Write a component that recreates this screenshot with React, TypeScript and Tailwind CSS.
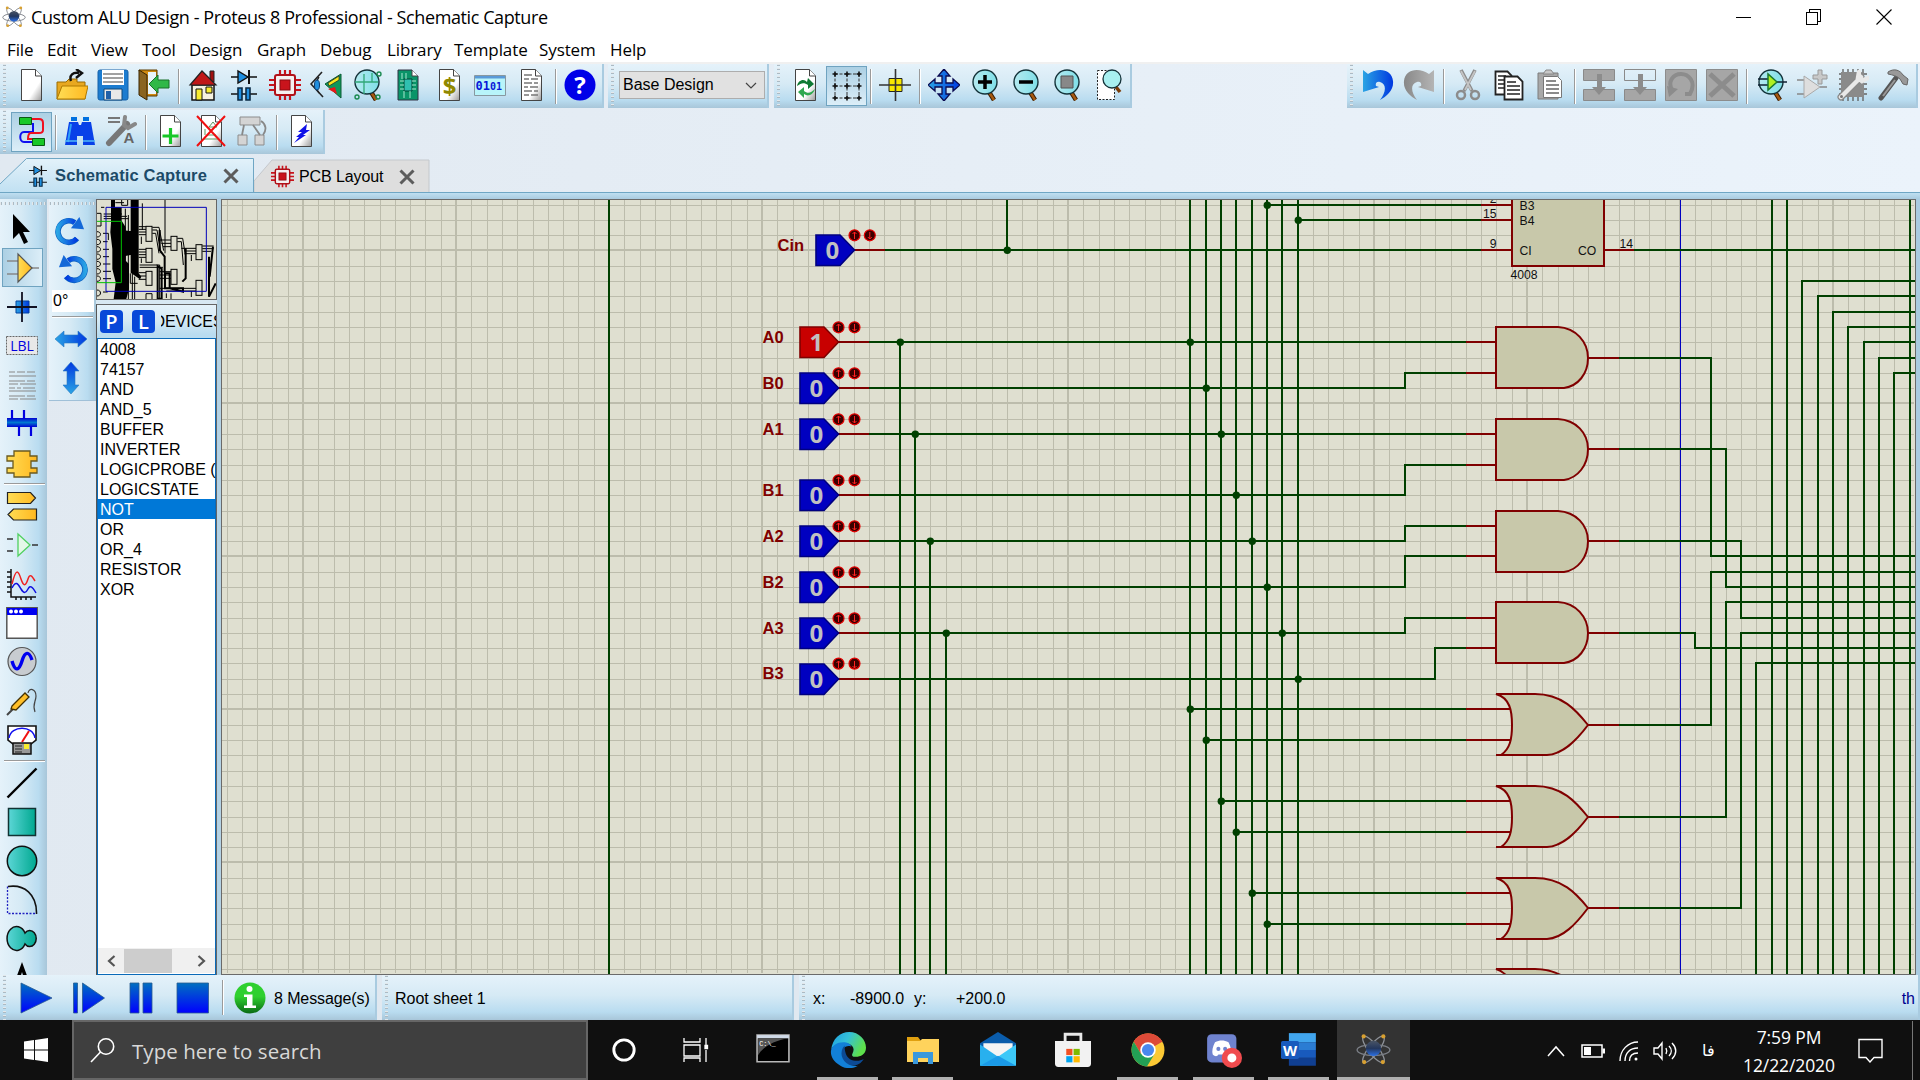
import React from "react";

type Kids = { children?: React.ReactNode };

const Ico = ({ children, s = 32 }: Kids & { s?: number }) => (
  <svg width={s} height={s} viewBox="0 0 32 32" fill="none" className="shrink-0">
    {children}
  </svg>
);

const Cell = ({ children, on }: Kids & { on?: boolean }) => (
  <div
    className={
      on
        ? "flex h-10 w-[41px] shrink-0 items-center justify-center border border-[#6fa3c0] bg-gradient-to-b from-[#acd0e4] to-[#dceef8]"
        : "flex h-10 w-[41px] shrink-0 items-center justify-center pb-[2px] pr-[2px]"
    }
  >
    {children}
  </div>
);

const Sep = () => (
  <div className="flex w-2 shrink-0 justify-center">
    <div className="h-[35px] w-px bg-[#9a9a9a]" />
    <div className="h-[35px] w-px bg-white" />
  </div>
);

const Grip = () => (
  <div className="ml-[3px] h-full w-[3px] shrink-0 bg-[repeating-linear-gradient(to_bottom,#ffffff_0px,#8fa3b0_2px,transparent_2px,transparent_4px)]" />
);

const Bar = ({ children, className = "" }: Kids & { className?: string }) => (
  <div
    className={
      "flex items-center border-r-2 border-[#a9cbe0] bg-[linear-gradient(to_bottom,#e5f2fa,#d6eaf5_45%,#b9dcf0_82%,#a8c6d9)] " + className
    }
  >
    {children}
  </div>
);

/* ---------- shared icon shapes ---------- */

const Page = ({ children }: Kids) => (
  <Ico>
    <path d="M6.500 .5h14l6 6.500v24.500h-20z" fill="url(#paper)" stroke="#444" />
    <path d="M20.500 .5V7h6" fill="#fff" stroke="#444" />
    {children}
  </Ico>
);

const Lens = ({ children }: Kids) => (
  <Ico>
    <path d="M20 23l5 8" stroke="#3a1c00" strokeWidth="4.5" />
    <path d="M20 23l5 8" stroke="#a85a10" strokeWidth="2.5" />
    <circle cx="16" cy="13" r="12" fill="url(#lens)" stroke="#14333a" strokeWidth="1.4" />
    {children}
  </Ico>
);

const Diode = ({ s = 32 }: { s?: number }) => (
  <Ico s={s}>
    <path d="M3 8h26M3 25h26" stroke="#111" strokeWidth="1.6" />
    <path d="M10 2v12l10-6z" fill="#1f8fe0" stroke="#111" strokeWidth="1.4" />
    <path d="M21 1v14" stroke="#111" strokeWidth="2" />
    <path d="M10 19h4v12h-4zM18 19h4v12h-4z" fill="#1f8fe0" stroke="#0a2a44" strokeWidth="1.6" />
  </Ico>
);

const Chip = ({ s = 32 }: { s?: number }) => (
  <Ico s={s}>
    <path d="M11 1v30M16 1v30M21 1v30M0 11h32M0 16h32M0 21h32" stroke="#c8141c" strokeWidth="2.2" />
    <rect x="6" y="6" width="20" height="20" rx="2" fill="#f4f0f0" stroke="#b01018" strokeWidth="2" />
    <rect x="11" y="11" width="10" height="10" fill="#c8141c" stroke="#8a0a10" />
  </Ico>
);

const Atom = ({ s = 24 }: { s?: number }) => (
  <Ico s={s}>
    <ellipse cx="16" cy="16" rx="15" ry="4.500" stroke="#8e9298" strokeWidth="1.2" transform="rotate(52 16 16)" />
    <ellipse cx="16" cy="16" rx="15" ry="4.500" stroke="#8e9298" strokeWidth="1.2" transform="rotate(-52 16 16)" />
    <ellipse cx="16" cy="16.500" rx="15" ry="5" stroke="#7c8088" strokeWidth="1.2" />
    <circle cx="16" cy="15" r="7" fill="url(#ball)" />
    <g fill="#d8a030">
      <circle cx="7" cy="4" r="1.900" />
      <circle cx="25" cy="4" r="1.900" />
      <circle cx="7.500" cy="27.500" r="1.900" />
      <circle cx="24.500" cy="27.500" r="1.900" />
    </g>
  </Ico>
);

const Block = ({ children }: Kids) => (
  <Ico>
    <path d="M.5.5h31v31H.5z" fill="#a6a6a6" stroke="#8c8c8c" />
    {children}
  </Ico>
);

const Defs = () => (
  <svg width="0" height="0" className="absolute">
    <defs>
      <linearGradient id="paper" x1="0" y1="0" x2="1" y2="1">
        <stop offset=".65" stopColor="#fff" />
        <stop offset="1" stopColor="#9a9a9a" />
      </linearGradient>
      <linearGradient id="lens" x1="0" x2="1">
        <stop offset="0" stopColor="#b5eaf0" />
        <stop offset="1" stopColor="#7fdfe8" />
      </linearGradient>
      <linearGradient id="ball" x1="0" y1="0" x2="0" y2="1">
        <stop offset="0" stopColor="#4a5566" />
        <stop offset=".5" stopColor="#24375c" />
        <stop offset="1" stopColor="#2a70e8" />
      </linearGradient>
      <linearGradient id="blue" x1="0" x2="1">
        <stop offset="0" stopColor="#2aa4e4" />
        <stop offset="1" stopColor="#0038e0" />
      </linearGradient>
      <linearGradient id="play" x1="0" y1="0" x2="0" y2="1">
        <stop offset="0" stopColor="#0070c0" />
        <stop offset="1" stopColor="#0000ff" />
      </linearGradient>
      <linearGradient id="bus" x1="0" y1="0" x2="0" y2="1">
        <stop offset="0" stopColor="#0000d0" />
        <stop offset=".5" stopColor="#0078d0" />
        <stop offset="1" stopColor="#0000d0" />
      </linearGradient>
      <linearGradient id="gold" x1="0" x2="1">
        <stop offset="0" stopColor="#ffdd55" />
        <stop offset="1" stopColor="#ffb820" />
      </linearGradient>
      <linearGradient id="teal" x1="0" x2="1">
        <stop offset="0" stopColor="#5cd6d6" />
        <stop offset="1" stopColor="#00a890" />
      </linearGradient>
      <linearGradient id="grey" x1="0" x2="1">
        <stop offset="0" stopColor="#888" />
        <stop offset="1" stopColor="#b4b4b4" />
      </linearGradient>
      <linearGradient id="info" x1="0" y1="0" x2="0" y2="1">
        <stop offset=".45" stopColor="#2fd02f" />
        <stop offset="1" stopColor="#0a6a14" />
      </linearGradient>
      <linearGradient id="edgeA" x1="0" y1="0" x2="1" y2=".4">
        <stop offset="0" stopColor="#1b9de2" />
        <stop offset=".5" stopColor="#35c1d8" />
        <stop offset="1" stopColor="#5ee04c" />
      </linearGradient>
    </defs>
  </svg>
);

/* ---------- title bar and menu ---------- */

const TitleBar = () => (
  <div className="flex h-9 items-center bg-white pb-[2px]">
    <div className="ml-px flex w-[26px] justify-center">
      <Atom s={24} />
    </div>
    <div className="ml-[4px] whitespace-nowrap font-['Open_Sans',sans-serif] text-[18px] tracking-[-0.4px] text-black">
      Custom ALU Design - Proteus 8 Professional - Schematic Capture
    </div>
    <div className="ml-auto mr-[28px] flex items-center gap-[54px]">
      <svg width="16" height="16" viewBox="0 0 16 16" shapeRendering="crispEdges">
        <path d="M0 8h15" stroke="#000" />
      </svg>
      <svg width="16" height="16" viewBox="0 0 16 16" fill="none" shapeRendering="crispEdges">
        <path d="M.5 3.500h11v12H.5zM3.500 3V.5h11v12H12" stroke="#000" />
      </svg>
      <svg width="16" height="16" viewBox="0 0 16 16">
        <path d="M.5.5l15 15M15.500.500l-15 15" stroke="#000" strokeWidth="1.1" />
      </svg>
    </div>
  </div>
);

const MenuBar = () => (
  <div className="flex h-[26px] items-center bg-white pl-[7px] pt-px font-['Open_Sans',sans-serif] text-[17px] tracking-[-0.1px] text-black">
    <span className="w-10">File</span>
    <span className="w-[44px]">Edit</span>
    <span className="w-[51px]">View</span>
    <span className="w-[47px]">Tool</span>
    <span className="w-[68px]">Design</span>
    <span className="w-[63px]">Graph</span>
    <span className="w-[67px]">Debug</span>
    <span className="w-[67px]">Library</span>
    <span className="w-[85px]">Template</span>
    <span className="w-[71px]">System</span>
    <span>Help</span>
  </div>
);

/* ---------- toolbars ---------- */

const ToolRow1 = () => (
  <div className="flex h-[44px]">
    <Bar className="w-[604px]">
      <Grip />
      <div className="w-[5px]" />
      <Cell><Page /></Cell>
      <Cell>
        <Ico>
          <path d="M1 13h9l3-3h8v3h8v17H1z" fill="#e8a820" stroke="#9a6a00" />
          <path d="M6 17h26l-3 13H1z" fill="url(#gold)" stroke="#b07a00" />
          <path d="M15 12c-2-6 2-9 8-8M20 0l6 4-6 5" stroke="#111" strokeWidth="2.4" />
        </Ico>
      </Cell>
      <Cell>
        <Ico>
          <rect x="1" y="1" width="30" height="30" rx="2" fill="#1c7cd0" stroke="#1560a8" />
          <path d="M5 1h22v15H5z" fill="#fff" />
          <path d="M6 5h20M6 9h20M6 13h20" stroke="#444" strokeWidth="1.2" />
          <path d="M7 20h18v11H7z" fill="#e8e8e8" stroke="#104878" />
          <path d="M9 22h5v8H9z" fill="#2060a8" />
        </Ico>
      </Cell>
      <Cell>
        <Ico>
          <path d="M1 1h18v26H8z" fill="#d08a10" stroke="#5a3a00" />
          <path d="M10 3h8v22h-8z" fill="#e8f4fa" />
          <path d="M1 1l8 5v25l-8-5z" fill="#8a6420" stroke="#3a2400" />
          <path d="M11 15l9-9v5h11v8H20v5z" fill="#30b848" stroke="#187028" />
        </Ico>
      </Cell>
      <Sep />
      <Cell>
        <Ico>
          <path d="M23 2h4v11h-4z" fill="#a01010" stroke="#222" />
          <path d="M5 16h22v15H5z" fill="#f6f2e0" stroke="#111" strokeWidth="1.5" />
          <path d="M3 16L15 2l14 14z" fill="#c01818" stroke="#222" strokeWidth="1.2" />
          <path d="M9 20h6v11H9z" fill="#f8ec30" stroke="#111" />
          <path d="M19 18h6v6h-6z" fill="#f8ec30" stroke="#111" />
        </Ico>
      </Cell>
      <Cell><Diode /></Cell>
      <Cell><Chip /></Cell>
      <Cell>
        <Ico>
          <path d="M12 3L1 15l12 13" stroke="#222" strokeWidth="1.6" />
          <path d="M9 8c-4 5-4 11 0 16" stroke="#222" strokeWidth="1.4" />
          <ellipse cx="7" cy="16" rx="2.500" ry="5" fill="#2090e0" stroke="#0a3c70" />
          <path d="M15 15L31 5v24z" fill="#10985a" stroke="#0a5c34" />
          <path d="M18 14l11-7v4l-10 6z" fill="#f8e820" stroke="#222" strokeWidth=".7" />
          <path d="M18 20l7-2 2 7z" fill="#e81818" />
        </Ico>
      </Cell>
      <Cell>
        <Lens>
          <path d="M4 13h9v12M13 5v8h14M21 4v9" stroke="#30a878" strokeWidth="1.3" />
          <circle cx="28" cy="5" r="2" stroke="#1a8a50" strokeWidth="1.4" />
          <circle cx="6" cy="28" r="2" stroke="#1a8a50" strokeWidth="1.4" />
          <circle cx="27" cy="28" r="2" stroke="#1a8a50" strokeWidth="1.4" />
        </Lens>
      </Cell>
      <Cell>
        <Ico>
          <path d="M6 1h14l6 6v24H6z" fill="#0a9468" stroke="#334" />
          <path d="M20 1v6h6" fill="#fff" stroke="#444" />
          <path d="M12 10h8v12h-8z" fill="#30c0b0" stroke="#043" />
          <path d="M8 12h4M8 16h4M8 20h4M20 12h4M20 16h4M20 20h4M10 4v6M14 4v6M12 22v7M18 22v7" stroke="#a8e8d0" />
        </Ico>
      </Cell>
      <Cell>
        <Page>
          <text x="16.500" y="26" textAnchor="middle" fontSize="24" fontWeight="bold" fontFamily="Open Sans" fill="#908800">$</text>
        </Page>
      </Cell>
      <Cell>
        <Ico>
          <path d="M.5 6.500h31v20H.5z" fill="#b8f4fa" stroke="#8898a0" />
          <path d="M1 7h30v2.500H1z" fill="#5a9ad8" />
          <text x="1.500" y="20.500" fontSize="12" fontWeight="bold" fontFamily="DejaVu Sans Mono" fill="#0818d8">01<tspan fontSize="10">01</tspan></text>
        </Ico>
      </Cell>
      <Cell>
        <Page>
          <path d="M9 6h8M9 10h5M16 10h7M9 14h8M19 14h4M9 18h4M15 18h8M9 22h8M19 22h4M9 26h5M16 26h7" stroke="#777" strokeWidth="1.3" />
        </Page>
      </Cell>
      <Sep />
      <Cell>
        <Ico>
          <circle cx="16" cy="16" r="15.500" fill="#0000e8" />
          <text x="16" y="24.500" textAnchor="middle" fontSize="24" fontWeight="bold" fontFamily="Open Sans" fill="#fff">?</text>
        </Ico>
      </Cell>
    </Bar>
    <div className="w-1" />
    <Bar className="w-[161px]">
      <Grip />
      <div className="mb-[2px] ml-[5px] flex h-7 w-[146px] items-center justify-between border border-[#adadad] bg-[#e1e1e1] pl-[3px] pr-[7px] text-[16px] text-black">
        <span className="whitespace-nowrap">Base Design</span>
        <svg width="12" height="7" viewBox="0 0 12 7" fill="none"><path d="M1 1l5 5 5-5" stroke="#444" strokeWidth="1.2" /></svg>
      </div>
    </Bar>
    <div className="w-[5px]" />
    <Bar className="w-[358px]">
      <Grip />
      <div className="w-[5px]" />
      <Cell>
        <Page>
          <path d="M8 17c1-6 7-8 10-4l1-4 6 6-6 5v-4c-4-3-7-2-11 1z" fill="#0f7a34" />
          <path d="M26 20c-2 6-7 8-11 5v4l-6-6 6-5v4c4 3 7 2 11-2z" fill="#30a850" />
        </Page>
      </Cell>
      <Cell on>
        <Ico>
          <path d="M4 4h24M4 16h24M4 28h24M4 4v24M16 4v24M28 4v24" stroke="#333" strokeDasharray="3 1.500" />
          <path d="M1.500 4h5M13.500 4h5M25.500 4h5M1.500 16h5M13.500 16h5M25.500 16h5M1.500 28h5M13.500 28h5M25.500 28h5M4 1.500v5M4 13.500v5M4 25.500v5M16 1.500v5M16 13.500v5M16 25.500v5M28 1.500v5M28 13.500v5M28 25.500v5" stroke="#111" strokeWidth="1.600" />
        </Ico>
      </Cell>
      <Sep />
      <Cell>
        <Ico>
          <path d="M10 9.500h13v13H10z" fill="#f8e800" stroke="#222" />
          <path d="M16.500 0v32M0 16h32" stroke="#333" strokeWidth="1.6" />
        </Ico>
      </Cell>
      <Sep />
      <Cell>
        <Ico>
          <path d="M16 0l6 7h-4v7h7v-4l7 6-7 6v-4h-7v7h4l-6 7-6-7h4v-7H7v4l-7-6 7-6v4h7V7h-4z" fill="url(#blue)" stroke="#0a0a50" strokeWidth="1.3" />
        </Ico>
      </Cell>
      <Cell><Lens><path d="M9 13h14M16 6v14" stroke="#000" strokeWidth="3.500" /></Lens></Cell>
      <Cell><Lens><path d="M9 13h14" stroke="#000" strokeWidth="3.500" /></Lens></Cell>
      <Cell><Lens><path d="M10 7h12v12H10z" fill="#888" stroke="#555" /></Lens></Cell>
      <Cell>
        <Ico>
          <path d="M5.500 1.500h17v29h-17z" fill="#fff" stroke="#222" strokeDasharray="2 1.500" />
          <path d="M24 18l4 5" stroke="#7a3c08" strokeWidth="3.500" />
          <circle cx="20" cy="10" r="9" fill="#a8f0f0" stroke="#14333a" strokeWidth="1.300" />
        </Ico>
      </Cell>
    </Bar>
    <div className="flex-1" />
    <Bar className="mr-[2px] w-[571px]">
      <Grip />
      <div className="w-[5px]" />
      <Cell>
        <Ico>
          <path d="M1 1l5 4C16-2 30 0 31 12c1 9-6 15-13 19 6-8 7-16 0-18-3-1-5 1-4 4l3 1-16 5z" fill="url(#blue)" />
        </Ico>
      </Cell>
      <Cell>
        <Ico>
          <path d="M31 1l-5 4C16-2 2 0 1 12c-1 9 6 15 13 19-6-8-7-16 0-18 3-1 5 1 4 4l-3 1 16 5z" fill="url(#grey)" />
        </Ico>
      </Cell>
      <Sep />
      <Cell>
        <Ico>
          <path d="M9 1l11 21M23 1L12 22" stroke="#8c8c8c" strokeWidth="3.600" />
          <path d="M9 2l10 19M23 2L13 21" stroke="#c4c4c4" strokeWidth="1.800" />
          <circle cx="9" cy="26" r="4" stroke="#8c8c8c" strokeWidth="2.500" />
          <circle cx="23" cy="26" r="4" stroke="#8c8c8c" strokeWidth="2.500" />
        </Ico>
      </Cell>
      <Cell>
        <Ico>
          <path d="M2.500 2.500h12l4 4v19h-16z" fill="#fff" stroke="#222" strokeWidth="1.800" />
          <path d="M5 7h8M5 11h10M5 15h10M5 19h8" stroke="#222" strokeWidth="1.500" />
          <path d="M11.500 7.500h13l5 5v18h-18z" fill="#fff" stroke="#222" strokeWidth="1.800" />
          <path d="M14 13h9M14 17h13M14 21h13M14 25h13" stroke="#222" strokeWidth="1.500" />
        </Ico>
      </Cell>
      <Cell>
        <Ico>
          <path d="M4 4h20v26H4z" fill="#a8a8a8" stroke="#7c7c7c" />
          <path d="M9 5l3-4h5l3 4z" fill="#c8c8c8" stroke="#888" />
          <path d="M9.500 7.500h14l4 4v17h-18z" fill="#fff" stroke="#777" />
          <path d="M12 12h10M12 16h13M12 20h13M12 24h13" stroke="#666" strokeWidth="1.500" />
        </Ico>
      </Cell>
      <Sep />
      <Cell>
        <Ico>
          <path d="M.5.5h31v11H.5zM.5 20.500h31v11H.5z" fill="#a6a6a6" stroke="#8a8a8a" />
          <path d="M14 5h5v13h4l-7 8-7-8h5z" fill="#8c8c8c" />
        </Ico>
      </Cell>
      <Cell>
        <Ico>
          <path d="M.5.5h31v11H.5z" stroke="#8a8a8a" />
          <path d="M.5 20.500h31v11H.5z" fill="#a6a6a6" stroke="#8a8a8a" />
          <path d="M14 5h5v13h4l-7 8-7-8h5z" fill="#8c8c8c" />
        </Ico>
      </Cell>
      <Cell>
        <Block>
          <path d="M8 23C1 12 9 5 16 5s16 7 9 20h-5" stroke="#8c8c8c" strokeWidth="4" />
          <path d="M2 17l11 3-9 8z" fill="#8c8c8c" />
        </Block>
      </Cell>
      <Cell><Block><path d="M4 5l24 22M28 5L4 27" stroke="#8c8c8c" strokeWidth="5" /></Block></Cell>
      <Sep />
      <Cell>
        <Lens>
          <path d="M3 10h10M3 16h10M21 13h11" stroke="#123" strokeWidth="1.300" />
          <path d="M13 5v16l9-8z" fill="#b0f020" stroke="#1a7a30" strokeWidth="1.500" />
        </Lens>
      </Cell>
      <Cell>
        <Ico>
          <path d="M1 11h7M1 25h7M24 18h7" stroke="#888" strokeWidth="1.500" />
          <path d="M8 7v22l16-11z" fill="#dedede" stroke="#aaa" />
          <path d="M22 1h4v5h5v4h-5v5h-4v-5h-5V6h5z" fill="#c8c8c8" stroke="#999" />
        </Ico>
      </Cell>
      <Cell>
        <Ico>
          <path d="M6 0v32M11 0v32M16 0v32M21 0v32M26 0v32M2 5h28M2 10h28M2 15h28M2 20h28M2 25h28" stroke="#666" strokeWidth="1.400" />
          <path d="M4 3h23v25H4z" fill="#8a8a8a" />
          <path d="M4 28L24 8" stroke="#888" strokeWidth="7" strokeLinecap="round" />
          <path d="M4 28L24 8M22 3l-1 6 4 3 6-3" stroke="#e8e8e8" strokeWidth="4.500" strokeLinecap="round" />
          <circle cx="4.500" cy="27.500" r="1.500" fill="#777" />
        </Ico>
      </Cell>
      <Cell>
        <Ico>
          <path d="M18 9L3 29" stroke="#555" strokeWidth="5" strokeLinecap="round" />
          <path d="M17 11L5 27" stroke="#999" strokeWidth="2" />
          <path d="M10 3c6-4 12-2 15 3l5 4-1 6-4-1-3-5c-3-3-7-4-12-5z" fill="#999" stroke="#666" />
        </Ico>
      </Cell>
    </Bar>
  </div>
);

const ToolRow2 = () => (
  <div className="mt-[2px] flex h-[44px]">
    <Bar className="w-[325px]">
      <Grip />
      <div className="w-[5px]" />
      <Cell on>
        <Ico>
          <path d="M17 7v9H8c-5 0-5 10 0 10h8" stroke="#1010f0" strokeWidth="2" />
          <path d="M15 3h8c3 0 4 1 4 4v7c0 2-1 3-4 3h-8c-2 0-3 2-3 6h5" stroke="#f01020" strokeWidth="2" />
          <path d="M3.500 1.500h12v7h-12zM16.500 22.500h12v7h-12z" fill="#18c828" stroke="#0a5a14" />
        </Ico>
      </Cell>
      <Sep />
      <Cell>
        <Ico>
          <path d="M7 2h6v4H7zM19 2h6v4h-6z" fill="#0070e0" />
          <path d="M5 7h9l1 3h2l1-3h9l4 23H19v-9h-6v9H1z" fill="#0840e8" />
          <path d="M7 9L4 27" stroke="#30a0f8" strokeWidth="2" />
          <path d="M1 26h12M19 26h12" stroke="#50b8f8" strokeWidth="1.500" />
        </Ico>
      </Cell>
      <Cell>
        <Ico>
          <path d="M3 3h12M3 7h12" stroke="#777" strokeWidth="2.200" />
          <path d="M4 28L22 9" stroke="#777" strokeWidth="6" strokeLinecap="round" />
          <path d="M20 2l-1 8 4 3 7-4" stroke="#888" strokeWidth="4" strokeLinecap="round" />
          <text x="24" y="28" textAnchor="middle" fontSize="15" fontWeight="bold" fontFamily="Liberation Sans" fill="#666">A</text>
        </Ico>
      </Cell>
      <Sep />
      <Cell><Page><path d="M16.500 13v16M8.500 21h16" stroke="#18c828" strokeWidth="3.200" /></Page></Cell>
      <Cell>
        <Page>
          <path d="M9 24h14M12 20h9M14 12h8l-4-5zM10 14v6" stroke="#5a9a60" />
          <path d="M2 1l28 30M30 1L2 31" stroke="#f01010" strokeWidth="2" />
        </Page>
      </Cell>
      <Cell>
        <Ico>
          <path d="M4 2h20v8H4zM2 20h9v10H2zM19 20h9v10h-9z" fill="#d4d4d4" stroke="#8c8c8c" />
          <path d="M8 10L6 20M17 10l7 10M25 6c5 3 6 9 2 14" stroke="#888" strokeWidth="1.800" />
        </Ico>
      </Cell>
      <Sep />
      <Cell><Page><path d="M22 9l-9 8h4l-6 5h3l-5 6 12-8h-3l7-5h-4z" fill="#1010e8" /></Page></Cell>
    </Bar>
  </div>
);

const Tabs = () => (
  <div className="relative mt-[4px] h-[35px]">
    <svg width="440" height="35" viewBox="0 158 440 35" className="absolute left-0 top-0">
      <defs>
        <linearGradient id="tabA" x1="0" y1="0" x2="0" y2="1">
          <stop offset="0" stopColor="#e3f2fa" />
          <stop offset="1" stopColor="#c0e0f2" />
        </linearGradient>
      </defs>
      <path d="M254 181l18-21h157v33H254z" fill="#dedede" stroke="#c4c8cc" />
      <path d="M0 184l26.500-25.500H253.500V193H0z" fill="url(#tabA)" />
      <path d="M0 184l26.500-25.500H253.500V193" fill="none" stroke="#6fa6c4" />
    </svg>
    <div className="relative flex h-full items-center border-b border-[#6fa6c4]">
      <div className="flex h-[35px] w-[253px] items-center pl-[27px] pt-px">
        <Diode s={22} />
        <span className="ml-[6px] w-[168px] whitespace-nowrap text-[16.500px] font-bold tracking-[0.15px] text-[#1c4a68]">Schematic Capture</span>
        <svg width="16" height="16" viewBox="0 0 16 16"><path d="M1.500 1.500l13 13M14.500 1.500l-13 13" stroke="#5c5c5c" strokeWidth="3" /></svg>
      </div>
      <div className="flex items-center pl-[18px] pt-[3px]">
        <Chip s={23} />
        <span className="ml-[5px] w-[100px] whitespace-nowrap text-[16px] tracking-[-0.1px] text-black">PCB Layout</span>
        <svg width="16" height="16" viewBox="0 0 16 16"><path d="M1.500 1.500l13 13M14.500 1.500l-13 13" stroke="#5c5c5c" strokeWidth="3" /></svg>
      </div>
    </div>
  </div>
);

/* ---------- left side ---------- */

const SCell = ({ children, on }: Kids & { on?: boolean }) => (
  <div
    className={
      on
        ? "ml-[2px] flex h-[39px] w-[41px] shrink-0 items-center justify-center border border-[#6fa3c0] bg-gradient-to-r from-[#acd0e4] to-[#dceef8]"
        : "ml-[1px] flex h-[39px] w-[41px] shrink-0 items-center justify-center"
    }
  >
    {children}
  </div>
);

const HSep = () => (
  <div className="ml-1 flex h-1 w-[41px] shrink-0 flex-col justify-center">
    <div className="h-px bg-[#9a9a9a]" />
    <div className="h-px bg-white" />
  </div>
);

const HGrip = () => (
  <div className="mt-[3px] h-[3px] w-full shrink-0 bg-[repeating-linear-gradient(to_right,#ffffff_0px,#8fa3b0_2px,transparent_2px,transparent_4px)]" />
);

const ModeBar = () => (
  <div className="flex h-[776px] w-[47px] shrink-0 flex-col overflow-hidden bg-[linear-gradient(to_right,#e5f2fa,#d6eaf5_45%,#b9dcf0_82%,#a8c6d9)]">
    <HGrip />
    <div className="h-1 shrink-0" />
    <SCell><Ico><path d="M7 1v25l6-6 5 11 4-2-5-10h7z" fill="#000" /></Ico></SCell>
    <SCell on>
      <Ico>
        <path d="M0 9h11M0 22h11M25 16h7" stroke="#888" strokeWidth="1.500" />
        <path d="M11 2v28l14-14z" fill="url(#gold)" stroke="#555" strokeWidth="1.200" />
      </Ico>
    </SCell>
    <SCell><Ico><path d="M10 10h13v12H10z" fill="url(#blue)" stroke="#0040a0" /><path d="M16 1v30M1 16h30" stroke="#112" strokeWidth="1.800" /></Ico></SCell>
    <SCell>
      <Ico>
        <path d="M.5 6.500h31v18H.5z" fill="#e8e8e8" stroke="#666" strokeDasharray="2 1" />
        <text x="16" y="20.500" textAnchor="middle" fontSize="14" fontFamily="Open Sans" fill="#0000e0">LBL</text>
      </Ico>
    </SCell>
    <SCell><Ico><path d="M3 3h6M11 3h8M21 3h8M3 7h27M3 12h16M21 12h8M3 15h9M14 15h16M3 19h6M11 19h4M17 19h12M3 22h27M3 27h16M21 27h8M3 30h9M14 30h16" stroke="#888" strokeWidth="1.200" /></Ico></SCell>
    <SCell><Ico><path d="M1 10h30v9H1z" fill="url(#bus)" /><path d="M6 2v9M18 2v9M13 18v10M25 18v10" stroke="#0000e0" strokeWidth="2.200" /></Ico></SCell>
    <SCell>
      <Ico>
        <path d="M8 4h16v5h7v5h-6v7h6v5h-7v4H8v-4H1v-5h6v-7H1V9h7z" fill="url(#gold)" stroke="#6a5a20" strokeWidth="1.300" />
      </Ico>
    </SCell>
    <HSep />
    <SCell><Ico><path d="M1.500 2.500h23l5 5.500-5 5.500h-23zM30.500 19h-23L2 24.500 7.500 30h23z" fill="url(#gold)" stroke="#222" strokeWidth="1.200" /></Ico></SCell>
    <SCell><Ico><path d="M1 10h6M1 22h6M26 16h6" stroke="#333" strokeWidth="1.500" /><path d="M12 5v22l12-11z" fill="#e4f8e8" stroke="#50d060" strokeWidth="1.300" /></Ico></SCell>
    <SCell>
      <Ico>
        <path d="M5 1v28h25M1 4h4M1 9h4M1 14h4M1 19h4M1 24h4M10 29v3M15 29v3M20 29v3M25 29v3" stroke="#111" strokeWidth="1.500" />
        <path d="M6 14c4-16 6-14 9-5s5 6 7 0 4-3 7 2" stroke="#f02020" strokeWidth="1.500" transform="translate(0 2)" />
        <path d="M6 20c4-8 6-4 9 1s5 4 7 0 4-3 8 4" stroke="#1010e0" strokeWidth="1.500" />
      </Ico>
    </SCell>
    <SCell><Ico><path d="M.8.8h30.400v30.400H.8z" fill="#fff" stroke="#555" strokeWidth="1.500" /><path d="M1 1h30v7H1z" fill="#0000f0" /><g fill="#fff"><circle cx="5" cy="4.500" r="2" /><circle cx="10" cy="4.500" r="2" /><circle cx="15" cy="4.500" r="2" /></g></Ico></SCell>
    <SCell><Ico><circle cx="16" cy="15.500" r="14" fill="#c8ccd0" stroke="#555" strokeWidth="1.200" /><path d="M6 15c3 11 7 10 10 0s7-10 10-1" stroke="#0000f0" strokeWidth="3.400" /></Ico></SCell>
    <SCell><Ico><path d="M1 30l6-6" stroke="#444" strokeWidth="2" /><path d="M6 21l13-13 4 4-13 13-5-1z" fill="#ffbf28" stroke="#443000" strokeWidth="1.300" /><path d="M22 8c1-6 8-4 8 3 0 6-4 8-1 16" stroke="#444" strokeWidth="1.200" /></Ico></SCell>
    <SCell>
      <Ico>
        <path d="M2 2h28v14l-5 4H7l-5-4z" fill="#fff" stroke="#111" strokeWidth="1.600" />
        <path d="M3 14C5 1 27 1 29 14" stroke="#1010f0" strokeWidth="1.500" />
        <path d="M16 18l7-11" stroke="#f01010" strokeWidth="2" />
        <path d="M7 19h18v11H7z" fill="#999" stroke="#111" strokeWidth="1.500" />
        <path d="M9 22h7M9 25h7M9 28h7" stroke="#222" />
        <path d="M18 20h5v5h-5z" fill="#f8ec30" />
      </Ico>
    </SCell>
    <HSep />
    <SCell><Ico><path d="M1.500 30.500l29-29" stroke="#000" strokeWidth="2.400" /></Ico></SCell>
    <SCell><Ico><path d="M2.500 2.500h27v27h-27z" fill="url(#teal)" stroke="#133" strokeWidth="1.500" /></Ico></SCell>
    <SCell><Ico><circle cx="16" cy="16" r="14.700" fill="url(#teal)" stroke="#111" strokeWidth="1.500" /></Ico></SCell>
    <SCell><Ico><path d="M1.500 2.500v27h29" stroke="#2020c0" strokeWidth="1.300" strokeDasharray="2 1.500" /><path d="M2 2.500C18 0 31 10 30.500 30" stroke="#111" strokeWidth="1.600" /></Ico></SCell>
    <SCell><Ico><path d="M19 10a9.500 12 0 1 0 0 11 6.500 8 0 1 0 0-11z" fill="url(#teal)" stroke="#111" strokeWidth="1.500" /></Ico></SCell>
    <SCell><Ico><path d="M16 0L5 30h5l6-20 6 20h5z" fill="#000" /></Ico></SCell>
  </div>
);

const Rotate = () => (
  <Ico s={30}>
    <path d="M23.500 24A11.500 11.500 0 1 1 21 7" stroke="#0a60c0" strokeWidth="6" />
    <path d="M23.200 24A11.500 11.500 0 1 1 21 7" stroke="url(#blue)" strokeWidth="4.500" />
    <path d="M17 13L26 1l5 13z" fill="#1468d8" />
  </Ico>
);

const OrientBar = () => (
  <div className="ml-[2px] flex h-[202px] w-[47px] shrink-0 flex-col items-center border-b border-[#a0c0d8] bg-[linear-gradient(to_right,#e5f2fa,#d6eaf5_45%,#b9dcf0_82%,#a8c6d9)]">
    <HGrip />
    <div className="mr-[5px] mt-[11px]"><Rotate /></div>
    <div className="mt-[8px] -scale-x-100"><Rotate /></div>
    <div className="ml-[3px] mt-[6px] flex h-[22px] w-[42px] shrink-0 items-center self-start bg-white pl-px text-[16px] text-black">0°</div>
    <div className="mt-[4px] w-[41px] shrink-0"><div className="h-px bg-[#9a9a9a]" /><div className="h-px bg-white" /></div>
    <div className="mr-[4px] mt-[5px]">
      <Ico><path d="M0 16l9-8v4h14V8l9 8-9 8v-4H9v4z" fill="url(#blue)" stroke="#2878c0" strokeWidth=".6" /></Ico>
    </div>
    <div className="mr-[4px] mt-[7px] -rotate-90">
      <Ico><path d="M0 16l9-8v4h14V8l9 8-9 8v-4H9v4z" fill="url(#blue)" stroke="#2878c0" strokeWidth=".6" /></Ico>
    </div>
  </div>
);

const Preview = () => {
  const chips = [
    [439, 109, 45], [514, 139, 42], [589, 164, 45], [439, 175, 42], [439, 244, 42], [514, 238, 45], [589, 271, 45],
  ];
  return (
    <svg width="119" height="99" viewBox="292 30 357 297" fill="none" className="block bg-[#dfdfd0]">
      <path d="M334 30h12v22h20v40l12 20v100l10 10v75l-8 30h-38l6-50-10-40v-60l-6-50 2-30z" fill="#000" />
      <path d="M393 30h24v220l8 10-4 8-28-20zM366 120l30 4v70l-30 6z" fill="#000" />
      <path d="M377 56v271M386 75v252M398 250v77M405 260v67M428 40v80M496 30v160M347 38h26" stroke="#000" strokeWidth="3" />
      <path d="M312 72h55M312 79h70M312 86h75M417 110h22M417 118h22M417 126h22M417 134h22M417 178h22M417 186h22M417 194h22M417 202h22M417 248h22M417 258h22M417 268h22M458 112h20l14 70M458 120h14l12 70M458 130h10l10 60M533 145h16l8 50M533 155h12l6 70M475 150h39M485 160h29M490 170h24M480 245h34M480 255h34M480 265h34M608 168h34M608 176h34M608 184h26M545 175h44M555 183h34M555 191h34M480 295h109M500 303h89M420 225h60v100M420 232h70M392 250v30h22" stroke="#000" strokeWidth="3" />
      <path d="M474 228l12 8v90h-12zM496 250h14v45l40 10v-10h-54zM558 175v90l-10 10M480 120v60l15 20v50M628 200v120l20-40M640 170l-10 90" stroke="#000" strokeWidth="6" />
      {chips.map(([x, y, h]) => (
        <rect key={x + "-" + y} x={x} y={y} width="18" height={h} fill="#dfdfd0" stroke="#000" strokeWidth="3" />
      ))}
      <path d="M366 30v16h18V30M292 70h12v38h-12M292 125c14 0 14 16 0 16M292 148c14 0 14 16 0 16M292 170c14 0 14 16 0 16M292 192c14 0 14 16 0 16M292 214c14 0 14 16 0 16M292 236c14 0 14 16 0 16M292 258c14 0 14 16 0 16M292 300c14 0 14 18 0 18M310 130h16v20M310 155h14M310 178h18M310 200h18M310 222h22M310 244h24M310 266h24M310 306h14M439 327v-16h18v16M514 310v17M575 195v18M500 310v14M575 303v18M425 140v22M425 205v14M304 52h10" stroke="#000" strokeWidth="3" />
      <path d="M319 52h301v252H319z" stroke="#0000b8" strokeWidth="3" />
      <path d="M290 94h75v184h-75" stroke="#00c000" strokeWidth="3" />
    </svg>
  );
};

const DEVICES = ["4008", "74157", "AND", "AND_5", "BUFFER", "INVERTER", "LOGICPROBE (", "LOGICSTATE", "NOT", "OR", "OR_4", "RESISTOR", "XOR"];

const DevicePanel = () => (
  <div className="flex h-[776px] w-[121px] shrink-0 flex-col">
    <div className="h-[101px] border border-[#666]">
      <Preview />
    </div>
    <div className="h-[4px] shrink-0 bg-[#d8e8f2]" />
    <div className="flex min-h-0 flex-1 flex-col border border-b-0 border-[#666] border-l-[#555]">
      <div className="flex h-[33px] shrink-0 items-center overflow-hidden bg-[linear-gradient(to_bottom,#e5f2fa,#d6eaf5_45%,#b9dcf0_90%)] pl-[3px]">
        <div className="flex h-[23px] w-[23px] shrink-0 items-center justify-center rounded-[4px] bg-[#0848d8] font-['Open_Sans',sans-serif] text-[20px] font-semibold leading-[23px] text-white">P</div>
        <div className="ml-[9px] flex h-[23px] w-[23px] shrink-0 items-center justify-center rounded-[4px] bg-[#0848d8] font-['Open_Sans',sans-serif] text-[20px] font-semibold leading-[23px] text-white">L</div>
        <div className="ml-[6px] flex flex-1 justify-center overflow-hidden whitespace-nowrap text-[16px] text-black">DEVICES</div>
      </div>
      <div className="flex min-h-0 flex-1 flex-col border border-[#0a6ab8] bg-white">
        {DEVICES.map((d) => (
          <div
            key={d}
            className={
              d === "NOT"
                ? "h-5 shrink-0 whitespace-nowrap bg-[#0078d7] pl-[2px] text-[16px] leading-[21px] text-white"
                : "h-5 shrink-0 whitespace-nowrap pl-[2px] text-[16px] leading-[21px] text-black"
            }
          >
            {d}
          </div>
        ))}
        <div className="mb-px mt-auto flex h-[25px] items-center bg-[#f0f0f0]">
          <div className="flex w-[26px] justify-center"><svg width="9" height="12" viewBox="0 0 9 12" fill="none"><path d="M7.500 1L2 6l5.500 5" stroke="#555" strokeWidth="2.200" /></svg></div>
          <div className="h-6 w-[48px] bg-[#cdcdcd]" />
          <div className="ml-auto flex w-[28px] justify-center"><svg width="9" height="12" viewBox="0 0 9 12" fill="none"><path d="M1.500 1L7 6l-5.500 5" stroke="#555" strokeWidth="2.200" /></svg></div>
        </div>
      </div>
    </div>
  </div>
);

/* ---------- schematic ---------- */

/* Grid pitch is 15.3px; a few lines snap down to the previous pixel. */
const X = (n: number) => (n === 15 ? 1756 : Math.round(1527.01 + 15.3 * n));
const Y = (n: number) => (n === 17 ? 663 : n === 37 ? 969 : Math.round(403.42 + 15.3 * n));

const range = (a: number, b: number) => Array.from({ length: b - a + 1 }, (_, i) => a + i);

/* Wires are polylines on grid coordinates: [column, row] pairs. */
const T = -13.3;
const B = 37.6;
const R = 25.4;
const WIRES: number[][] = [
  [-60, T, -60, B],
  [-34, T, -34, -10],
  [-42, -10, -3, -10],
  [-43, -4, -4, -4],
  [-43, -1, -8, -1, -8, -2, -4, -2],
  [-43, 2, -4, 2],
  [-43, 6, -8, 6, -8, 4, -4, 4],
  [-43, 9, -8, 9, -8, 8, -4, 8],
  [-43, 12, -8, 12, -8, 10, -4, 10],
  [-43, 15, -8, 15, -8, 14, -4, 14],
  [-43, 18, -6, 18, -6, 16, -4, 16],
  [-41, -4, -41, B],
  [-40, 2, -40, B],
  [-39, 9, -39, B],
  [-38, 15, -38, B],
  ...range(-22, -15).map((c) => [c, T, c, B]),
  [-17, -13, -3, -13],
  [-15, -12, -3, -12],
  [-22, 20, -4, 20],
  [-21, 22, -4, 22],
  [-20, 26, -4, 26],
  [-19, 28, -4, 28],
  [-18, 32, -4, 32],
  [-17, 34, -4, 34],
  [7, -10, R, -10],
  [6, -3, 12, -3, 12, 10, R, 10],
  [6, 3, 13, 3, 13, 12, R, 12],
  [6, 9, 14, 9, 14, 14, R, 14],
  [6, 15, 11, 15, 11, 16, R, 16],
  [6, 21, 12, 21, 12, 11, R, 11],
  [6, 27, 13, 27, 13, 13, R, 13],
  [6, 33, 14, 33, 14, 15, R, 15],
  [15, B, 15, 17, R, 17],
  [16, T, 16, B],
  [17, T, 17, B],
  ...range(18, 24).map((c) => [c, B, c, c - 26, R, c - 26]),
  [25, T, 25, B],
];

const DOTS = [
  [-34, -10], [-41, -4], [-40, 2], [-39, 9], [-38, 15],
  [-22, -4], [-21, -1], [-20, 2], [-19, 6], [-18, 9], [-17, 12], [-16, 15], [-15, 18],
  [-17, -13], [-15, -12],
  [-22, 20], [-21, 22], [-20, 26], [-19, 28], [-18, 32], [-17, 34],
];

const INPUTS: [string, number, string][] = [
  ["Cin", -10, "0"], ["A0", -4, "1"], ["B0", -1, "0"], ["A1", 2, "0"], ["B1", 6, "0"],
  ["A2", 9, "0"], ["B2", 12, "0"], ["A3", 15, "0"], ["B3", 18, "0"],
];

const poly = (p: number[]) => {
  let d = "";
  for (let i = 0; i < p.length; i += 2) d += (i ? "L" : "M") + X(p[i]) + " " + Y(p[i + 1]);
  return d;
};

const InputState = ({ name, row, val }: { name: string; row: number; val: string }) => {
  const dx = name === "Cin" ? 16 : 0;
  const y = Y(row);
  const hot = val === "1";
  return (
    <g>
      <path d={`M${838 + dx} ${y}H${869 + dx}`} stroke="#800000" strokeWidth="2" shapeRendering="crispEdges" />
      <path
        d={`M${800 + dx} ${y - 15}h24l14.500 15-14.500 15.500h-24z`}
        fill={hot ? "#c80000" : "#0000c0"}
        stroke={hot ? "#800000" : "#000080"}
        strokeWidth="1.600"
      />
      <text x={816.3 + dx} y={y + 8.8} textAnchor="middle" fontFamily="Open Sans" fontWeight="bold" fontSize="24" fill="#c0c0c0">
        {val}
      </text>
      <text x={dx ? 777.5 : 762.5} y={y + 0.8 - (row === 18 ? 1 : 0)} fontFamily="Liberation Sans" fontWeight="bold" fontSize="16.500" fill="#800000">
        {name}
      </text>
      {[838.5, 854.5].map((cx, i) => (
        <g key={cx}>
          <circle cx={cx + dx - (dx && i ? 0.7 : 0)} cy={y - 14.7 - (row === 18 ? 0.7 : 0)} r="5.500" fill="#3c0000" stroke="#e80000" strokeWidth="1.200" />
          <path
            d={`M${cx + dx - (dx && i ? 0.7 : 0)} ${y - 18}v7m-2 ${i ? -2 : -5}l2 ${i ? 2 : -2} 2 ${i ? -2 : 2}`}
            stroke="#ff2020"
            strokeWidth="1"
            fill="none"
          />
        </g>
      ))}
    </g>
  );
};

const AndGate = ({ row }: { row: number }) => {
  const t = Y(row - 2);
  const b = Y(row + 2);
  const m = Y(row);
  return (
    <g stroke="#800000" strokeWidth="2" fill="none">
      <path d={`M1466 ${Y(row - 1)}H1496M1466 ${Y(row + 1)}H1496M1588 ${m}H1619`} shapeRendering="crispEdges" />
      <path d={`M1496 ${t}H1558C1576 ${t + 1} 1588 ${m - 16} 1588 ${m}S1578 ${b - 2} 1564 ${b}H1496Z`} fill="#c8c8aa" />
    </g>
  );
};

const OrGate = ({ row }: { row: number }) => {
  const t = Y(row - 2);
  const b = Y(row + 2);
  const m = Y(row);
  return (
    <g stroke="#800000" strokeWidth="2" fill="none">
      <path
        d={`M1496 ${t}H1535C1562 ${t} 1576 ${m - 15} 1588 ${m}C1576 ${m + 16} 1563 ${b - 1} 1547 ${b}H1496H1501C1510 ${b - 6} 1512 ${m + 14} 1512 ${m}S1510 ${t + 4} 1496 ${t}Z`}
        fill="#c8c8aa"
      />
      <path d={`M1466 ${Y(row - 1)}H1510M1466 ${Y(row + 1)}H1510M1588 ${m}H1619`} shapeRendering="crispEdges" />
    </g>
  );
};

const Schematic = () => (
  <svg width="1693" height="774" viewBox="222 200 1693 774" className="block bg-[#dfdfd0]" fill="none">
    <g fill="#bcbcac" shapeRendering="crispEdges">
      {range(-85, 25).map((n) => (
        <rect key={"v" + n} x={n % 10 ? X(n) : X(n) - 1} y="200" width={n % 10 ? 1 : 2} height="773" />
      ))}
      {range(-13, 37).map((n) => (
        <rect key={"h" + n} x="222" y={n % 10 ? Y(n) : Y(n) - 1} width="1692" height={n % 10 ? 1 : 2} />
      ))}
    </g>
    <rect x="1680" y="200" width="1" height="774" fill="#0000c0" shapeRendering="crispEdges" />
    <path d="M1512 196V266H1604V196z" fill="#c8c8aa" stroke="#800000" strokeWidth="2" shapeRendering="crispEdges" />
    <g stroke="#004000" strokeWidth="2" shapeRendering="crispEdges">
      {WIRES.map((w, i) => (
        <path key={i} d={poly(w)} />
      ))}
    </g>
    <path
      d={`M1481 ${Y(-13)}H1512M1481 ${Y(-12)}H1512M1481 ${Y(-10)}H1512M1604 ${Y(-10)}H1634`}
      stroke="#800000"
      strokeWidth="2"
      shapeRendering="crispEdges"
    />
    <g fill="#004000">
      {DOTS.map(([c, r]) => (
        <circle key={c + "_" + r} cx={X(c) + 0.3} cy={Y(r) + 0.3} r="3.700" />
      ))}
    </g>
    {[-3, 3, 9, 15].map((r) => <AndGate key={r} row={r} />)}
    {[21, 27, 33, 39].map((r) => <OrGate key={r} row={r} />)}
    {INPUTS.map(([n, r, v]) => <InputState key={n} name={n} row={r} val={v} />)}
    <g fontFamily="Liberation Sans" fontSize="12.200" fill="#111">
      <text x="1519.500" y="210">B3</text>
      <text x="1519.500" y="225">B4</text>
      <text x="1519.500" y="255">CI</text>
      <text x="1578" y="255">CO</text>
      <text x="1496.500" y="203" textAnchor="end">2</text>
      <text x="1496.500" y="218" textAnchor="end">15</text>
      <text x="1496.500" y="248" textAnchor="end">9</text>
      <text x="1619.500" y="248">14</text>
      <text x="1510.500" y="279">4008</text>
    </g>
  </svg>
);

/* ---------- status bar ---------- */

const StatusBar = () => (
  <div className="flex h-[45px] bg-[#e0e8f0] text-[16px] text-black">
    <Bar className="w-[377px]">
      <Grip />
      <svg width="192" height="32" viewBox="18 0 192 32" className="ml-3 shrink-0" fill="url(#play)" stroke="#2a5a90" strokeWidth=".8">
        <path d="M21 1l31 15-31 15zM73.500 1h4v30h-4zM82.500 1l22 15-22 15zM130 1h9v30h-9zM143 1h9v30h-9zM177 1h31.500v30H177z" />
      </svg>
      <div className="ml-[9px]"><Sep /></div>
      <div className="ml-[7px]">
        <Ico>
          <circle cx="16" cy="16" r="15.500" fill="url(#info)" />
          <circle cx="15.500" cy="7" r="3" fill="#fff" />
          <path d="M10 12.500h8.500v11H22V26H10v-2.500h3v-8.500h-3z" fill="#fff" />
        </Ico>
      </div>
      <span className="ml-2 whitespace-nowrap pt-[2px] tracking-[-0.1px]">8 Message(s)</span>
    </Bar>
    <div className="w-[5px]" />
    <Bar className="w-[412px]">
      <Grip />
      <span className="ml-[7px] pt-[2px]">Root sheet 1</span>
    </Bar>
    <div className="w-[5px]" />
    <Bar className="flex-1 border-r-0">
      <Grip />
      <span className="ml-[8px] w-[37px] pt-[2px]">x:</span>
      <span className="w-[64px] pt-[2px]">-8900.0</span>
      <span className="w-[42px] pt-[2px]">y:</span>
      <span className="pt-[2px]">+200.0</span>
      <span className="ml-auto mr-[3px] pt-[2px] text-[#000090]">th</span>
    </Bar>
  </div>
);

/* ---------- taskbar ---------- */

const TaskButton = ({ children, run, active }: Kids & { run?: boolean; active?: boolean }) => (
  <div className={active ? "ml-px flex h-[60px] w-[73px] flex-col items-center bg-[#333]" : "flex h-[60px] w-[75px] flex-col items-center"}>
    <div className="flex flex-1 items-center pt-[2px]">{children}</div>
    <div className={active ? "h-[3px] w-full bg-[#b0b0b0]" : run ? "h-[3px] w-[61px] bg-[#b0b0b0]" : "h-[3px]"} />
  </div>
);

const Taskbar = () => (
  <div className="flex h-[60px] bg-[#101010] text-white">
    <div className="flex w-[72px] items-center justify-center">
      <svg width="24" height="24" viewBox="0 0 24 24" fill="#fff"><path d="M0 3.500l10-1.400v9.400H0zM11 2l13-2v11.500H11zM0 12.500h10v9.400L0 20.500zM11 12.500h13V24l-13-2z" /></svg>
    </div>
    <div className="flex w-[516px] items-center border-2 border-[#666] bg-[#3f3f3f] pl-[16px]">
      <svg width="25" height="25" viewBox="0 0 25 25" fill="none"><circle cx="16" cy="8.500" r="7.700" stroke="#fff" strokeWidth="1.600" /><path d="M10.500 14L1 24" stroke="#fff" strokeWidth="1.600" /></svg>
      <span className="ml-[17px] whitespace-nowrap pt-[2px] font-['Open_Sans',sans-serif] text-[20.500px] tracking-[0.05px] text-[#d8d8d8]">Type here to search</span>
    </div>
    <div className="-ml-[2px] flex">
      <TaskButton><Ico s={26}><circle cx="16" cy="16" r="12.500" stroke="#fff" strokeWidth="3.600" /></Ico></TaskButton>
      <TaskButton>
        <svg width="26" height="26" viewBox="0 0 26 26" fill="none" stroke="#fff" strokeWidth="1.300" className="mr-[5px]">
          <path d="M1 1v4h16V1M1 8h16v11H1zM1 25v-4h16v4M23 1v7M23 13v12" /><path d="M22 8.500h2.500v3H22z" fill="#fff" />
        </svg>
      </TaskButton>
      <div className="-ml-px flex">
        <TaskButton>
          <Ico s={34}>
            <path d="M1 2h30v25H1z" fill="#000" stroke="#b8b8b8" strokeWidth="1.500" /><path d="M1 2h30v3H1z" fill="#d0dae8" />
            <path d="M2 5h28c-12 2-24 8-28 16z" fill="#555" />
            <text x="3" y="12.500" fontSize="6.500" fontFamily="Liberation Mono" fill="#fff">C:\_</text>
          </Ico>
        </TaskButton>
        <TaskButton run>
          <Ico s={36}>
            <path d="M1 16C2 6 9 0 17 0c9 0 15 7 15 14 0 6-5 8-9 8-3 0-4-1-3-3 3-5-1-9-7-9C6 10 2 13 1 16z" fill="url(#edgeA)" />
            <path d="M1 16c1-4 5-7 11-7 3 0 6 1 7 4-6-2-9 3-7 9 2 5 7 9 13 8-5 3-12 3-17-1-5-3-8-8-7-13z" fill="#1280d8" />
            <path d="M13 12c-5 5-3 14 4 17 5 2 10 0 13-5-5 3-14 2-16-5-1-3-1-5-1-7z" fill="#0c4a94" />
          </Ico>
        </TaskButton>
        <TaskButton run>
          <Ico s={32}>
            <path d="M0 3h11l3 4v6H0z" fill="#e0a010" /><path d="M0 7h13l2-2h17v23H0z" fill="#ffd35c" />
            <path d="M6 18h20v12h-5v-6H11v6H6z" fill="#3a98dc" />
          </Ico>
        </TaskButton>
        <TaskButton>
          <Ico s={36}>
            <path d="M0 10L16 0l16 10v5H0z" fill="#0a5cab" /><path d="M3 10h26v8l-13 10L3 18z" fill="#f4f4f4" />
            <path d="M0 11l16 11v8H0z" fill="#28b0ee" /><path d="M32 11L16 22 0 30h32z" fill="#3cc8f8" /><path d="M0 30h32L16 21z" fill="#1a9ae8" />
          </Ico>
        </TaskButton>
        <TaskButton>
          <Ico s={36}>
            <path d="M9 10V2h14v8" stroke="#e8e8e8" strokeWidth="2.500" /><path d="M0 8h32v20a3 3 0 0 1-3 3H3a3 3 0 0 1-3-3z" fill="#f2f2f2" />
            <path d="M10 15h5.500v5.500H10z" fill="#f25022" /><path d="M16.500 15H22v5.500h-5.500z" fill="#7fba00" /><path d="M10 21.500h5.500V27H10z" fill="#00a4ef" /><path d="M16.500 21.500H22V27h-5.500z" fill="#ffb900" />
          </Ico>
        </TaskButton>
        <TaskButton run>
          <Ico s={34}>
            <circle cx="16" cy="16" r="15.500" fill="#fcc934" />
            <path d="M16 16L2.600 8.200A15.500 15.500 0 0 1 29.400 8.200z" fill="#dc4a38" /><path d="M16 8.500h13.700A15.500 15.500 0 0 0 2.600 8.200L9.500 20z" fill="#dc4a38" />
            <path d="M2.600 8.200A15.500 15.500 0 0 0 15 31.500L22 20l-12.500 0z" fill="#23a055" />
            <circle cx="16" cy="16" r="7.300" fill="#fff" /><circle cx="16" cy="16" r="5.700" fill="#4a88ee" />
          </Ico>
        </TaskButton>
        <div className="ml-px flex">
          <TaskButton run>
            <Ico s={36}>
              <rect x="1" y="2" width="26" height="25" rx="4" fill="#6f83cf" />
              <path d="M8 9c4-2 8-2 12 0 2 4 3 8 2 11-2 2-4 2-5 0h-6c-1 2-3 2-5 0-1-3 0-7 2-11z" fill="#fff" />
              <circle cx="11" cy="15" r="1.800" fill="#6f83cf" /><circle cx="17" cy="15" r="1.800" fill="#6f83cf" />
              <circle cx="23" cy="23" r="9" fill="#f04b4e" /><circle cx="23" cy="23" r="4" fill="#fff" />
            </Ico>
          </TaskButton>
          <TaskButton run>
            <Ico s={36}>
              <path d="M7 1h24v8H7z" fill="#41a5ee" /><path d="M7 9h24v7H7z" fill="#2b7cd3" /><path d="M7 16h24v7H7z" fill="#185abd" /><path d="M7 23h24v7H7z" fill="#103f91" />
              <rect x="0" y="8" width="16" height="16" rx="1.500" fill="#185abd" />
              <text x="8" y="21" textAnchor="middle" fontSize="13" fontWeight="bold" fontFamily="Open Sans" fill="#fff">W</text>
            </Ico>
          </TaskButton>
          <TaskButton active><Atom s={35} /></TaskButton>
        </div>
      </div>
    </div>
    <div className="ml-auto flex items-center pt-px">
      <svg width="18" height="12" viewBox="0 0 18 12" fill="none"><path d="M1 11l8-9 8 9" stroke="#fff" strokeWidth="1.500" /></svg>
      <svg width="24" height="14" viewBox="0 0 24 14" fill="none" className="ml-[16px]"><path d="M1 1h20v12H1z" stroke="#fff" strokeWidth="1.500" /><path d="M3 3h7v8H3zM21.500 4.500H24v5h-2.500z" fill="#fff" /></svg>
      <svg width="20" height="20" viewBox="0 0 20 20" fill="none" stroke="#fff" strokeWidth="1.400" className="ml-[14px]"><path d="M1 20C1 9 9 1 19 1M6 20c0-8 5-13 13-13M10.500 20c0-5 3-8 8.500-8" /><circle cx="17" cy="18" r="1.500" fill="#fff" stroke="none" /></svg>
      <svg width="24" height="20" viewBox="0 0 24 20" fill="none" stroke="#fff" strokeWidth="1.400" className="ml-[14px]"><path d="M1 7h4l4-5v16l-4-5H1zM13 7c1 2 1 4 0 6M16 5c3 3 3 7 0 10M19 2c5 5 5 11 0 16" /></svg>
      <span className="ml-[25px] w-[17px] whitespace-nowrap font-['DejaVu_Sans',sans-serif] text-[16px]">فا</span>
      <div className="ml-[18px] w-[104px] whitespace-nowrap text-center font-['Open_Sans',sans-serif] text-[17.500px] leading-[28px] tracking-[-0.1px]">
        <div>7:59 PM</div>
        <div>12/22/2020</div>
      </div>
      <svg width="25" height="25" viewBox="0 0 25 25" fill="none" className="ml-[17px]"><path d="M1 1.500h23v18h-8l-4 4.500-4-4.500H1z" stroke="#fff" strokeWidth="1.400" /></svg>
      <div className="ml-[29px] h-[59px] w-px bg-[#777]" />
      <div className="w-[7px]" />
    </div>
  </div>
);

export default function App() {
  return (
    <div className="flex h-[1080px] w-[1920px] flex-col overflow-hidden bg-gradient-to-r from-[#e1e9f1] to-[#ebf3fb] font-['Liberation_Sans',Arial,sans-serif]">
      <Defs />
      <TitleBar />
      <MenuBar />
      <div className="h-[2px] bg-[#f0f0f0]" />
      <ToolRow1 />
      <ToolRow2 />
      <Tabs />
      <div className="h-[6px] shrink-0 bg-gradient-to-b from-[#bfdff1] to-[#a9cbe0]" />
      <div className="flex h-[776px] shrink-0">
        <ModeBar />
        <OrientBar />
        <DevicePanel />
        <div className="w-[4px] shrink-0 bg-[#b4d2e4]" />
        <div className="h-[776px] w-[1695px] shrink-0 border border-[#6a6a6a]">
          <Schematic />
        </div>
        <div className="flex-1 bg-[#a9cbe0]" />
      </div>
      <StatusBar />
      <Taskbar />
    </div>
  );
}
